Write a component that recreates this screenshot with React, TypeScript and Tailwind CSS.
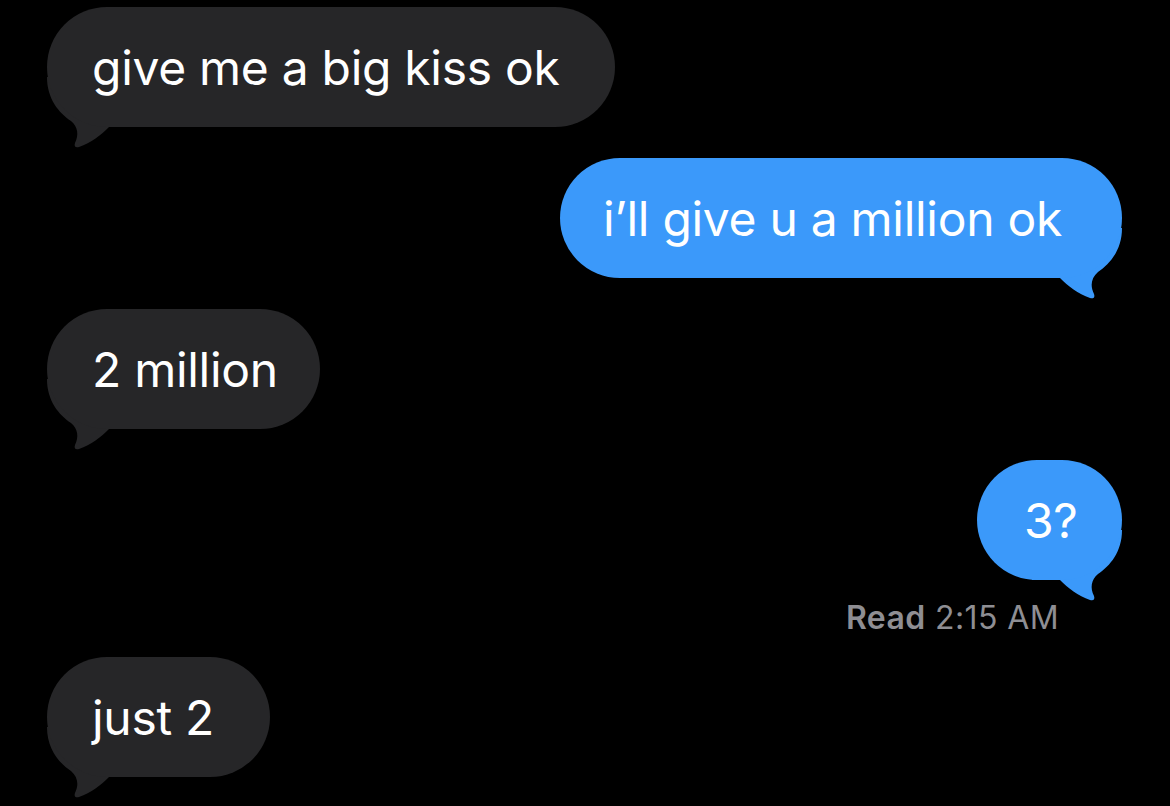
import React from "react";

const GRAY = "#262628";
const BLUE = "#3b99fa";

function Tail({ color, side }: { color: string; side: "left" | "right" }) {
  return (
    <svg
      width="90"
      height="75"
      viewBox="0 0 90 75"
      className={
        side === "left"
          ? "absolute left-0 bottom-[-25px]"
          : "absolute right-0 bottom-[-25px] -scale-x-100"
      }
    >
      <path
        d="M0,0 C0,22 12,36 24,44 C31,50 32,58 28,66 C27,69 28,71 32,70 C44,66 54,58 62,50 L90,50 L90,0 Z"
        fill={color}
      />
    </svg>
  );
}

function Bubble({
  text,
  me,
  w,
  pl,
}: {
  text: string;
  me?: boolean;
  w: string;
  pl: string;
}) {
  return (
    <div className={`relative flex ${me ? "self-end" : "self-start"}`}>
      <Tail color={me ? BLUE : GRAY} side={me ? "right" : "left"} />
      <div
        className={`relative h-[120px] rounded-[60px] flex items-center text-[48px] leading-none text-white tracking-[-0.3px] whitespace-nowrap ${w} ${pl} ${
          me ? "bg-[#3b99fa]" : "bg-[#262628]"
        }`}
      >
        <span className="pt-[2px]">{text}</span>
      </div>
    </div>
  );
}

export default function App() {
  return (
    <div
      className="w-[1170px] h-[806px] bg-black overflow-hidden flex flex-col pl-[47px] pr-[48px] pt-[7px]"
      style={{ fontFamily: "Inter, 'Noto Sans', sans-serif" }}
    >
      <Bubble text="give me a big kiss ok" w="w-[568px]" pl="pl-[45px]" />
      <div className="h-[31px]" />
      <Bubble text="i’ll give u a million ok" me w="w-[562px]" pl="pl-[43px]" />
      <div className="h-[31px]" />
      <Bubble text="2 million" w="w-[273px]" pl="pl-[45px]" />
      <div className="h-[31px]" />
      <Bubble text="3?" me w="w-[145px]" pl="pl-[47px]" />
      <div className="self-end mr-[63px] mt-[20px] text-[32px] leading-[36px] tracking-[0.4px] text-[#8e8e93] whitespace-nowrap">
        <span className="font-semibold">Read</span> 2:15 AM
      </div>
      <div className="h-[21px]" />
      <Bubble text="just 2" w="w-[223px]" pl="pl-[45px]" />
    </div>
  );
}
